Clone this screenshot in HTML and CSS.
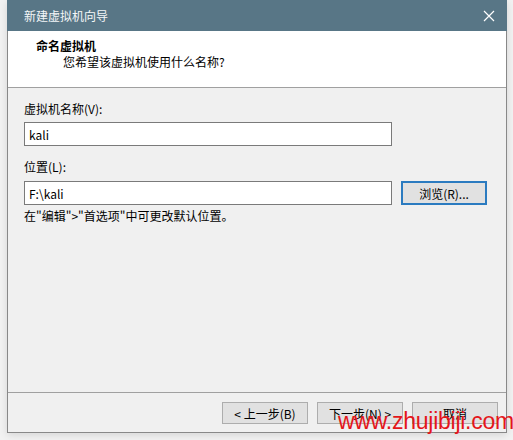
FILE: index.html
```html
<!DOCTYPE html>
<html lang="zh-CN">
<head>
    <meta charset="UTF-8">
    <title>新建虚拟机向导</title>
    <link rel="stylesheet" href="styles.css">
</head>
<body>
    <div class="window">
        <div class="titlebar">
            <span class="title">新建虚拟机向导</span>
            <span class="close">
                <svg width="12" height="12" viewBox="0 0 12 12">
                    <path d="M1 1 L11 11 M11 1 L1 11" stroke="#ffffff" stroke-width="1.2" fill="none"/>
                </svg>
            </span>
        </div>

        <div class="header">
            <h1>命名虚拟机</h1>
            <p>您希望该虚拟机使用什么名称?</p>
        </div>

        <div class="content">
            <label class="field-label">虚拟机名称(V):</label>
            <div class="row">
                <input class="text-input" type="text" value="kali">
            </div>

            <label class="field-label second">位置(L):</label>
            <div class="row">
                <input class="text-input" type="text" value="F:\kali">
                <button class="btn btn-default">浏览(R)...</button>
            </div>
            <p class="hint">在"编辑"&gt;"首选项"中可更改默认位置。</p>
        </div>

        <div class="footer">
            <button class="btn">&lt; 上一步(B)</button>
            <button class="btn">下一步(N) &gt;</button>
            <button class="btn">取消</button>
        </div>
    </div>

    <div class="watermark">www.zhujibiji.com</div>
</body>
</html>
```

FILE: styles.css
```css
* {
    box-sizing: border-box;
    margin: 0;
    padding: 0;
}

body {
    background: #f2f2f2;
    font-family: "Noto Sans CJK SC", "Liberation Sans", sans-serif;
    font-size: 12px;
    color: #000;
    width: 513px;
    height: 440px;
    overflow: hidden;
    position: relative;
}

.window {
    margin-left: 7px;
    width: 500px;
    height: 433px;
    background: #f0f0f0;
    border: 1px solid #888;
    border-top: none;
    box-shadow: 0 2px 8px rgba(0, 0, 0, 0.12);
    display: flex;
    flex-direction: column;
}

.titlebar {
    height: 31px;
    background: #587686;
    margin: 0 -1px;
    display: flex;
    align-items: center;
    justify-content: space-between;
    padding: 0 10px 0 17px;
}

.title {
    color: #f4f6f8;
    font-size: 12px;
}

.close {
    display: flex;
    width: 16px;
    justify-content: center;
}

.header {
    background: #fff;
    height: 57px;
    border-bottom: 1px solid #a0a0a0;
    padding: 6px 0 0 28px;
}

.header h1 {
    font-size: 12px;
    font-weight: bold;
    line-height: 17px;
}

.header p {
    line-height: 16px;
    padding-left: 27px;
}

.content {
    flex: 1;
    padding: 13px 0 0 16px;
}

.field-label {
    display: block;
    line-height: 16px;
    margin-bottom: 5px;
}

.field-label.second {
    margin-top: 13px;
    margin-bottom: 6px;
}

.row {
    display: flex;
    gap: 9px;
}

.text-input {
    width: 368px;
    height: 24px;
    border: 1px solid #7a7a7a;
    background: #fff;
    font-family: "Noto Sans CJK SC", "Liberation Sans", sans-serif;
    font-size: 12px;
    padding: 0 4px;
    color: #000;
}

.hint {
    margin-top: 3px;
    line-height: 16px;
}

.btn {
    width: 86px;
    height: 22px;
    border: 1px solid #adadad;
    background: #e1e1e1;
    font-family: "Noto Sans CJK SC", "Liberation Sans", sans-serif;
    font-size: 12px;
    color: #000;
}

.btn-default {
    height: 24px;
    border: 2px solid #2b7bc0;
}

.footer {
    height: 40px;
    border-top: 1px solid #a0a0a0;
    display: flex;
    justify-content: flex-end;
    gap: 9px;
    padding: 9px 8px 0 0;
}

/* site watermark over the bottom-right corner */
.watermark {
    position: absolute;
    left: 338px;
    top: 408px;
    color: #e4161b;
    font-family: "Liberation Sans", sans-serif;
    font-size: 23px;
    letter-spacing: -0.25px;
    line-height: 26px;
}
```
